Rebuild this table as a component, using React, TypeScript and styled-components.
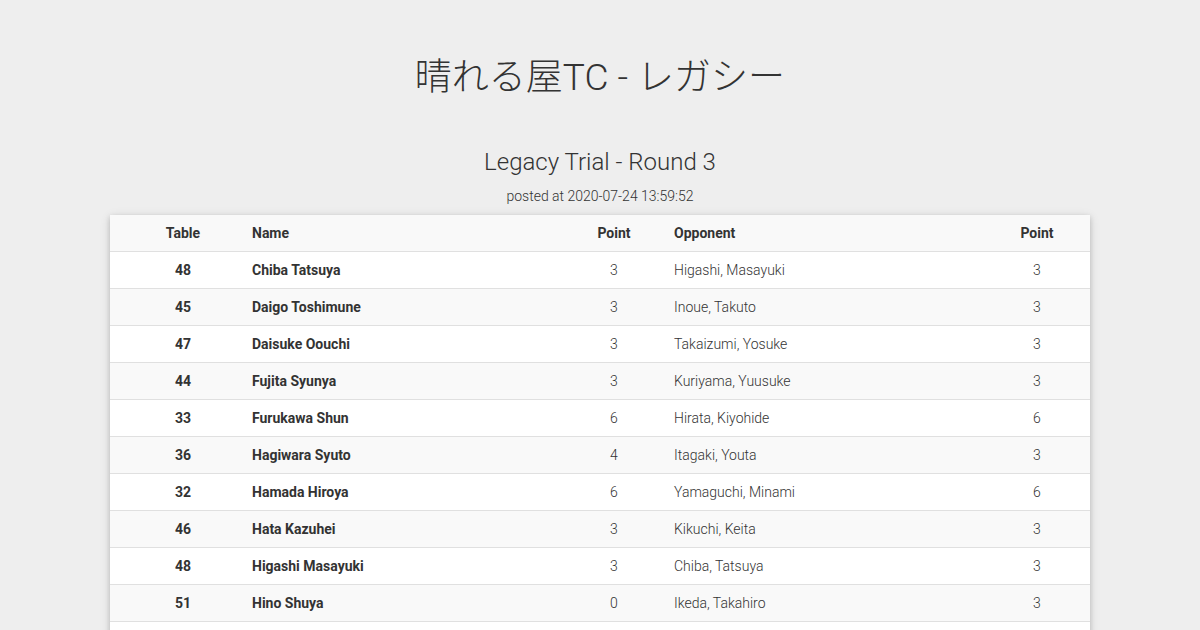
import React from 'react';
import styled, { createGlobalStyle } from 'styled-components';

interface Pairing {
  table: number;
  name: string;
  point: number;
  opponent: string;
  opponentPoint: number;
}

const pairings: Pairing[] = [
  { table: 48, name: 'Chiba Tatsuya', point: 3, opponent: 'Higashi, Masayuki', opponentPoint: 3 },
  { table: 45, name: 'Daigo Toshimune', point: 3, opponent: 'Inoue, Takuto', opponentPoint: 3 },
  { table: 47, name: 'Daisuke Oouchi', point: 3, opponent: 'Takaizumi, Yosuke', opponentPoint: 3 },
  { table: 44, name: 'Fujita Syunya', point: 3, opponent: 'Kuriyama, Yuusuke', opponentPoint: 3 },
  { table: 33, name: 'Furukawa Shun', point: 6, opponent: 'Hirata, Kiyohide', opponentPoint: 6 },
  { table: 36, name: 'Hagiwara Syuto', point: 4, opponent: 'Itagaki, Youta', opponentPoint: 3 },
  { table: 32, name: 'Hamada Hiroya', point: 6, opponent: 'Yamaguchi, Minami', opponentPoint: 6 },
  { table: 46, name: 'Hata Kazuhei', point: 3, opponent: 'Kikuchi, Keita', opponentPoint: 3 },
  { table: 48, name: 'Higashi Masayuki', point: 3, opponent: 'Chiba, Tatsuya', opponentPoint: 3 },
  { table: 51, name: 'Hino Shuya', point: 0, opponent: 'Ikeda, Takahiro', opponentPoint: 3 },
  { table: 34, name: 'Hirata Kiyohide', point: 6, opponent: 'Furukawa, Shun', opponentPoint: 6 },
];

const App: React.FC = () => {
  return (
    <>
      <GlobalStyle />
      <Page>
        <Title>晴れる屋TC - レガシー</Title>
        <RoundTitle>Legacy Trial - Round 3</RoundTitle>
        <Posted>posted at 2020-07-24 13:59:52</Posted>
        <Card>
          <Row $header>
            <Cell $align="center" $pad="0 0 0 16px" $bold>Table</Cell>
            <Cell $pad="0 0 0 12px" $bold>Name</Cell>
            <Cell $align="center" $bold>Point</Cell>
            <Cell $pad="0 0 0 6px" $bold>Opponent</Cell>
            <Cell $align="center" $bold>Point</Cell>
          </Row>
          {pairings.map((p, i) => (
            <Row key={i} $striped={i % 2 === 1}>
              <Cell $align="center" $pad="0 0 0 16px" $bold>{p.table}</Cell>
              <Cell $pad="0 0 0 12px" $bold>{p.name}</Cell>
              <Cell $align="center">{p.point}</Cell>
              <Cell $pad="0 0 0 6px">{p.opponent}</Cell>
              <Cell $align="center">{p.opponentPoint}</Cell>
            </Row>
          ))}
        </Card>
      </Page>
    </>
  );
};

const GlobalStyle = createGlobalStyle`
  body {
    margin: 0;
    background: #eeeeee;
    color: #333333;
    font-family: Roboto, "Noto Sans CJK JP", sans-serif;
  }
`;

const Page = styled.div`
  display: flex;
  flex-direction: column;
  align-items: center;
  padding-top: 55px;
`;

const Title = styled.h1`
  margin: 0;
  font-size: 37px;
  font-weight: 300;
  line-height: 46px;
  color: #333333;
`;

const RoundTitle = styled.h2`
  margin: 46px 0 0;
  font-size: 24px;
  font-weight: 300;
  line-height: 30px;
  color: #333333;
`;

const Posted = styled.div`
  margin-top: 10px;
  font-size: 14px;
  font-weight: 300;
  line-height: 18px;
  color: #333333;
`;

const Card = styled.div`
  margin-top: 10px;
  width: 980px;
  background: #ffffff;
  box-shadow: 0 2px 5px rgba(0, 0, 0, 0.16), 0 2px 10px rgba(0, 0, 0, 0.12);
`;

const Row = styled.div<{ $header?: boolean; $striped?: boolean }>`
  display: grid;
  grid-template-columns: 130px 320px 108px 1fr 106px;
  height: 37px;
  align-items: center;
  background: ${(p) => (p.$header || p.$striped ? '#f9f9f9' : '#ffffff')};
  border-bottom: 1px solid #e0e0e0;
  box-sizing: border-box;
`;

const Cell = styled.div<{ $align?: 'left' | 'center'; $pad?: string; $bold?: boolean }>`
  text-align: ${(p) => p.$align ?? 'left'};
  padding: ${(p) => p.$pad ?? '0'};
  font-size: 14px;
  font-weight: ${(p) => (p.$bold ? 700 : 300)};
  color: #333333;
  white-space: nowrap;
`;

export default App;
